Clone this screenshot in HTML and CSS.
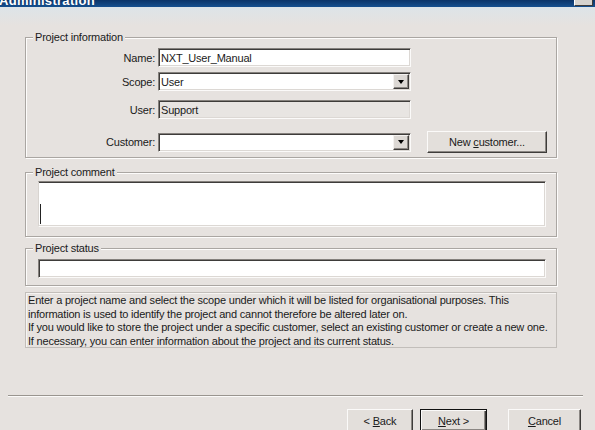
FILE: index.html
```html
<!DOCTYPE html>
<html>
<head>
    <meta charset="UTF-8">
    <title>Administration</title>
    <link rel="stylesheet" href="styles.css">
</head>
<body>
    <div class="titlebar">
        <span class="title">Administration</span>
        <span class="close"></span>
    </div>

    <div class="dialog">
        <fieldset class="group group-info">
            <legend>Project information</legend>
            <div class="row row-name">
                <label>Name:</label>
                <div class="field">NXT_User_Manual</div>
            </div>
            <div class="row row-scope">
                <label>Scope:</label>
                <div class="field combo"><span class="value">User</span><span class="drop"></span></div>
            </div>
            <div class="row row-user">
                <label>User:</label>
                <div class="field disabled">Support</div>
            </div>
            <div class="row row-customer">
                <label>Customer:</label>
                <div class="field combo"><span class="value"></span><span class="drop"></span></div>
                <button class="btn btn-new">New <u>c</u>ustomer...</button>
            </div>
        </fieldset>

        <fieldset class="group group-comment">
            <legend>Project comment</legend>
            <div class="field memo"><span class="caret"></span></div>
        </fieldset>

        <fieldset class="group group-status">
            <legend>Project status</legend>
            <div class="field wide"></div>
        </fieldset>

        <div class="hint">
            Enter a project name and select the scope under which it will be listed for organisational purposes. This<br>
            information is used to identify the project and cannot therefore be altered later on.<br>
            If you would like to store the project under a specific customer, select an existing customer or create a new one.<br>
            If necessary, you can enter information about the project and its current status.
        </div>
    </div>

    <div class="separator"></div>

    <div class="wizard-buttons">
        <button class="btn btn-back">&lt; <u>B</u>ack</button>
        <button class="btn btn-next btn-default"><u>N</u>ext &gt;</button>
        <button class="btn btn-cancel"><u>C</u>ancel</button>
    </div>
</body>
</html>
```

FILE: styles.css
```css
body {
    width: 595px;
    height: 430px;
    margin: 0;
    overflow: hidden;
    font-family: "Liberation Sans", Arial, sans-serif;
    font-size: 11px;
    letter-spacing: -0.2px;
    color: #1a1a1a;
    background: linear-gradient(#dde4e8 0%, #e6e2df 100%) 0 7px / 100% 18px no-repeat, #e6e2df;
}

.titlebar {
    display: flex;
    height: 7px;
    overflow: hidden;
    background: linear-gradient(#0b3468, #15508f);
    color: #fff;
}

.title {
    margin-top: -6px;
    margin-left: -1px;
    font-size: 13px;
    line-height: 13px;
    font-weight: bold;
    letter-spacing: 0.3px;
}

.close {
    width: 17px;
    height: 5px;
    margin-left: auto;
    margin-right: 2px;
    background: #d6d3ce;
    border: 1px solid;
    border-top: none;
    border-color: #fff #3e3c3a #3e3c3a #fff;
}

.dialog {
    width: 532px;
    margin-left: 25px;
    padding-top: 24px;
}

/* etched group box: grey line with a white one beside it */
.group {
    margin: 0;
    padding: 0 9px 4px 0;
    border: 1px solid #aaa6a2;
    box-shadow: inset 1px 1px 0 #fdfcfb, 1px 1px 0 #fdfcfb;
}

.group legend {
    margin-left: 7px;
    padding: 0 2px;
    line-height: 13px;
    background: #e6e2df;
}

.group-comment {
    margin-top: 8px;
    padding: 2px 9px 9px 0;
}

.group-status {
    margin-top: 5px;
    padding: 4px 9px 7px 0;
}

.row {
    display: flex;
    align-items: center;
}

.row label {
    width: 129px;
    margin-right: 3px;
    text-align: right;
}

.row-name { margin-top: 4px; }
.row-scope { margin-top: 5px; }
.row-user { margin-top: 9px; }
.row-customer { margin-top: 12px; height: 22px; }

.field {
    display: flex;
    align-items: center;
    box-sizing: border-box;
    width: 253px;
    height: 19px;
    padding-left: 2px;
    background: #fff;
    border: 1px solid;
    border-color: #85817d #fbfaf9 #fbfaf9 #85817d;
    box-shadow: inset 1px 1px 0 #3e3c3a, inset -1px -1px 0 #dcd8d4;
}

.field.disabled {
    background: #e8e5e2;
}

.combo {
    padding-right: 1px;
}

.combo .value {
    flex: 1;
}

.drop {
    display: flex;
    align-items: center;
    justify-content: center;
    box-sizing: border-box;
    width: 16px;
    height: 15px;
    background: #dcd8d4;
    border: 1px solid;
    border-color: #f4f2f0 #3e3c3a #3e3c3a #f4f2f0;
    box-shadow: inset -1px -1px 0 #8b8783;
}

.drop::after {
    content: "";
    border-left: 3.5px solid transparent;
    border-right: 3.5px solid transparent;
    border-top: 4px solid #000;
}

.memo,
.wide {
    width: 508px;
    margin-left: 12px;
}

.memo {
    height: 46px;
    align-items: flex-end;
    padding: 0 0 2px 1px;
    border-left-color: #d8d4d0;
    box-shadow: inset 0 1px 0 #3e3c3a, inset -1px -1px 0 #dcd8d4;
}

.caret {
    width: 1px;
    height: 20px;
    background: #222;
}

.hint {
    margin-top: 6px;
    height: 56px;
    box-sizing: border-box;
    padding: 1px 0 0 2px;
    line-height: 13.7px;
    border: 1px solid #c2beba;
    box-shadow: inset 1px 1px 0 #f6f4f2;
    white-space: nowrap;
}

.separator {
    margin: 47px 12px 0 8px;
    height: 1px;
    background: #99958f;
    border-bottom: 1px solid #fbfaf9;
}

.wizard-buttons {
    display: flex;
    justify-content: flex-end;
    gap: 7px;
    margin-top: 12px;
    padding-right: 14px;
}

.btn {
    box-sizing: border-box;
    height: 23px;
    padding: 0;
    font: inherit;
    letter-spacing: inherit;
    color: #1a1a1a;
    background: #e3dfdb;
    border: 1px solid;
    border-color: #fbfaf9 #3e3c3a #3e3c3a #fbfaf9;
    box-shadow: inset -1px -1px 0 #8b8783;
}

.btn-new {
    width: 120px;
    height: 22px;
    margin-left: 16px;
}

.btn-back { width: 66px; }
.btn-next { width: 67px; }
.btn-cancel { width: 73px; margin-left: 14px; }

.btn-default {
    border-color: #111;
    box-shadow: inset 1px 1px 0 #fbfaf9, inset -1px -1px 0 #3e3c3a, inset -2px -2px 0 #8b8783;
}
```
